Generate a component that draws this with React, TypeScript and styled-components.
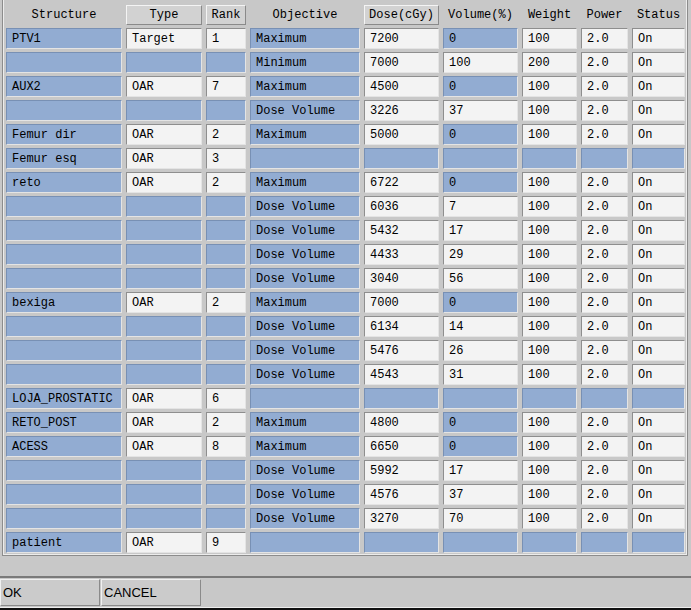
import React from 'react'
import styled, { createGlobalStyle } from 'styled-components'

type Row = {
  structure: string
  type: string
  rank: string
  objective: string
  dose: string
  volume: string
  weight: string
  power: string
  status: string
}

const mk = (
  structure: string,
  type: string,
  rank: string,
  objective = '',
  dose = '',
  volume = '',
): Row => ({
  structure,
  type,
  rank,
  objective,
  dose,
  volume,
  weight: objective ? '100' : '',
  power: objective ? '2.0' : '',
  status: objective ? 'On' : '',
})

const rows: Row[] = [
  mk('PTV1', 'Target', '1', 'Maximum', '7200', '0'),
  { ...mk('', '', '', 'Minimum', '7000', '100'), weight: '200' },
  mk('AUX2', 'OAR', '7', 'Maximum', '4500', '0'),
  mk('', '', '', 'Dose Volume', '3226', '37'),
  mk('Femur dir', 'OAR', '2', 'Maximum', '5000', '0'),
  mk('Femur esq', 'OAR', '3'),
  mk('reto', 'OAR', '2', 'Maximum', '6722', '0'),
  mk('', '', '', 'Dose Volume', '6036', '7'),
  mk('', '', '', 'Dose Volume', '5432', '17'),
  mk('', '', '', 'Dose Volume', '4433', '29'),
  mk('', '', '', 'Dose Volume', '3040', '56'),
  mk('bexiga', 'OAR', '2', 'Maximum', '7000', '0'),
  mk('', '', '', 'Dose Volume', '6134', '14'),
  mk('', '', '', 'Dose Volume', '5476', '26'),
  mk('', '', '', 'Dose Volume', '4543', '31'),
  mk('LOJA_PROSTATIC', 'OAR', '6'),
  mk('RETO_POST', 'OAR', '2', 'Maximum', '4800', '0'),
  mk('ACESS', 'OAR', '8', 'Maximum', '6650', '0'),
  mk('', '', '', 'Dose Volume', '5992', '17'),
  mk('', '', '', 'Dose Volume', '4576', '37'),
  mk('', '', '', 'Dose Volume', '3270', '70'),
  mk('patient', 'OAR', '9'),
]

const GlobalStyle = createGlobalStyle`
  html, body {
    margin: 0;
    padding: 0;
    background: #c8c8c8;
  }
`

const Window = styled.div`
  width: 691px;
  height: 610px;
  display: flex;
  flex-direction: column;
  background: #c8c8c8;
  font-family: 'Liberation Mono', 'DejaVu Sans Mono', monospace;
  font-size: 12px;
  color: #000;
  overflow: hidden;
`

const Panel = styled.div`
  margin: 0 3px 0 2px;
  height: 556px;
  box-sizing: border-box;
  border-left: 1px solid #8c8c8c;
  border-right: 1px solid #8c8c8c;
  border-bottom: 1px solid #8c8c8c;
  box-shadow: inset 1px 0 #ececec, inset -1px -1px #ececec;
  padding: 5px 0 0 3px;
`

const Grid = styled.div`
  display: grid;
  grid-template-columns: 116px 76px 40px 110px 75px 75px 55px 47px 53px;
  column-gap: 4px;
  row-gap: 3px;
`

const HeadLabel = styled.div`
  height: 20px;
  display: flex;
  align-items: center;
  justify-content: center;
`

const HeadButton = styled(HeadLabel)`
  box-sizing: border-box;
  background: #d2d2d2;
  border-top: 1px solid #f4f4f4;
  border-left: 1px solid #f4f4f4;
  border-right: 1px solid #8a8a8a;
  border-bottom: 1px solid #8a8a8a;
`

const Field = styled.div<{ $filled: boolean }>`
  height: 21px;
  box-sizing: border-box;
  padding: 0 0 0 5px;
  display: flex;
  align-items: center;
  white-space: pre;
  background: ${({ $filled }) => ($filled ? '#f3f3f3' : '#92acd2')};
  border-top: 1px solid ${({ $filled }) => ($filled ? '#8e8e8e' : '#7890b4')};
  border-left: 1px solid ${({ $filled }) => ($filled ? '#8e8e8e' : '#7890b4')};
  border-right: 1px solid #e4e4e4;
  border-bottom: 1px solid #e4e4e4;
`

const HeaderRow = styled.div`
  display: contents;
`

const Spacer = styled.div`
  flex: 1;
`

const Footer = styled.div`
  border-top: 2px solid #7a7a7a;
  border-bottom: 2px solid #111;
  height: 27px;
  display: flex;
  align-items: stretch;
  padding: 1px 0 2px 0;
  box-shadow: inset 0 -1px #eeeeee;
`

const FooterButton = styled.button`
  width: 100px;
  margin-right: 1px;
  background: #cbcbcb;
  border-top: 1px solid #f0f0f0;
  border-left: 1px solid #f0f0f0;
  border-right: 1px solid #8a8a8a;
  border-bottom: 1px solid #8a8a8a;
  font-family: 'Liberation Sans', Arial, sans-serif;
  font-size: 13px;
  text-align: left;
  padding: 0 0 0 2px;
  color: #000;
`

export default function App() {
  return (
    <Window>
      <GlobalStyle />
      <Panel>
        <Grid>
          <HeaderRow>
            <HeadLabel>Structure</HeadLabel>
            <HeadButton>Type</HeadButton>
            <HeadButton>Rank</HeadButton>
            <HeadLabel>Objective</HeadLabel>
            <HeadButton>Dose(cGy)</HeadButton>
            <HeadLabel>Volume(%)</HeadLabel>
            <HeadLabel>Weight</HeadLabel>
            <HeadLabel>Power</HeadLabel>
            <HeadLabel>Status</HeadLabel>
          </HeaderRow>
          {rows.map((r, i) => (
            <React.Fragment key={i}>
              <Field $filled={false}>{r.structure}</Field>
              <Field $filled={!!r.type}>{r.type}</Field>
              <Field $filled={!!r.rank}>{r.rank}</Field>
              <Field $filled={false}>{r.objective}</Field>
              <Field $filled={!!r.dose}>{r.dose}</Field>
              <Field $filled={!!r.volume && r.volume !== '0'}>{r.volume}</Field>
              <Field $filled={!!r.weight}>{r.weight}</Field>
              <Field $filled={!!r.power}>{r.power}</Field>
              <Field $filled={!!r.status}>{r.status}</Field>
            </React.Fragment>
          ))}
        </Grid>
      </Panel>
      <Spacer />
      <Footer>
        <FooterButton>OK</FooterButton>
        <FooterButton>CANCEL</FooterButton>
      </Footer>
    </Window>
  )
}
